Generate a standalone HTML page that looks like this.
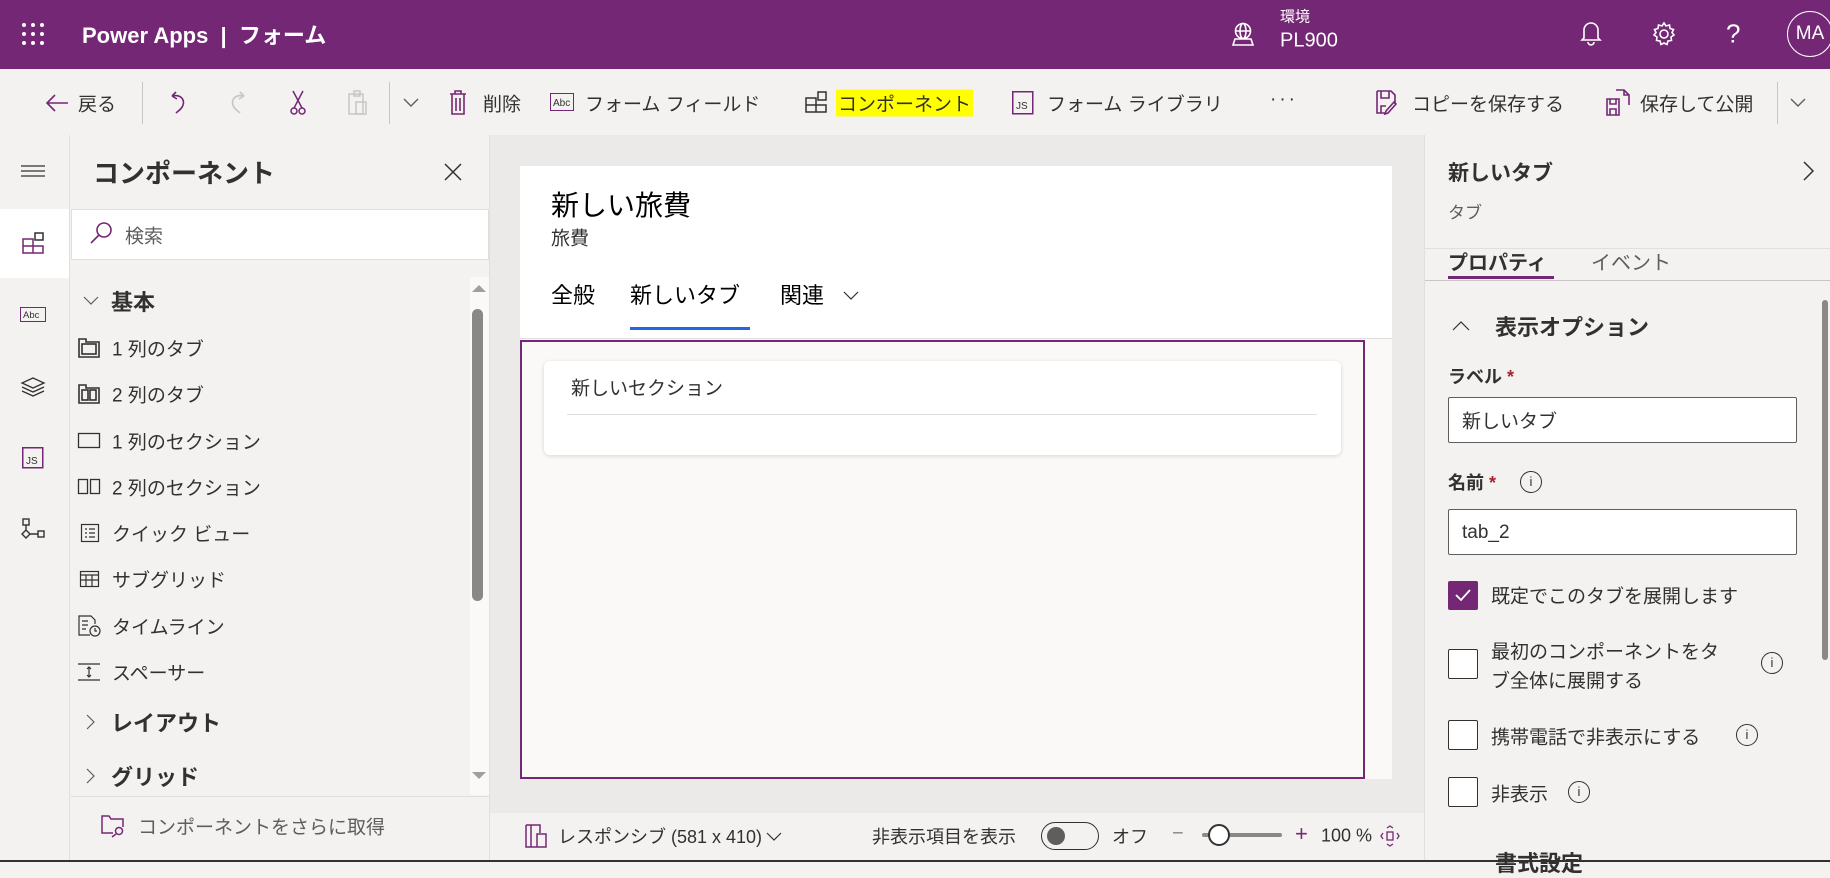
<!DOCTYPE html>
<html><head><meta charset="utf-8"><style>
*{box-sizing:border-box;margin:0;padding:0}
body{width:1830px;height:862px;overflow:hidden;position:relative;background:#f3f2f1;font-family:"Liberation Sans","Noto Sans CJK JP",sans-serif;color:#323130}
.a{position:absolute;white-space:nowrap}
.c{transform:translateY(-50%)}
svg{position:absolute;overflow:visible}
</style></head><body>
<!-- header -->
<div class="a" style="left:0;top:0;width:1830px;height:69px;background:#742774"></div>
<svg style="left:22px;top:23px" width="22" height="22" fill="#fff"><circle cx="2" cy="2" r="2"/><circle cx="11" cy="2" r="2"/><circle cx="20" cy="2" r="2"/><circle cx="2" cy="11" r="2"/><circle cx="11" cy="11" r="2"/><circle cx="20" cy="11" r="2"/><circle cx="2" cy="20" r="2"/><circle cx="11" cy="20" r="2"/><circle cx="20" cy="20" r="2"/></svg>
<div class="a c" style="left:82px;top:34px;color:#fff;font-size:22px;font-weight:bold">Power Apps &nbsp;|&nbsp; フォーム</div>
<svg style="left:1232px;top:22px" width="22" height="24" fill="none" stroke="#fff" stroke-width="1.6"><circle cx="11" cy="9" r="7.5"/><ellipse cx="11" cy="9" rx="3" ry="7.5"/><path d="M3.5 9h15M1 23h20l-2-6H3z"/></svg>
<div class="a c" style="left:1280px;top:16px;color:#fff;font-size:15px">環境</div>
<div class="a c" style="left:1280px;top:41px;color:#fff;font-size:20px">PL900</div>
<svg style="left:1580px;top:20px" width="22" height="26" fill="none" stroke="#fff" stroke-width="1.6"><path d="M4 18V10a7 7 0 0 1 14 0v8l2 2H2z M8 22a3 3 0 0 0 6 0"/></svg>
<svg style="left:1652px;top:22px" width="24" height="24" fill="none" stroke="#fff" stroke-width="1.6"><circle cx="12" cy="12" r="4"/><path d="M12 1l2 3 3.5-1 .5 3.5 3.5 1-1.5 3 2 2.5-3 2 .5 3.5-3.5.5-1 3.5-3-1.5-3 1.5-1-3.5-3.5-.5.5-3.5-3-2 2-2.5-1.5-3 3.5-1 .5-3.5 3.5 1z"/></svg>
<div class="a c" style="left:1726px;top:34px;color:#fff;font-size:26px">?</div>
<div class="a" style="left:1787px;top:11px;width:46px;height:46px;border:1.5px solid #fff;border-radius:50%;color:#fff;font-size:19px;line-height:43px;text-align:center">MA</div>
<!-- toolbar -->
<div class="a" style="left:0;top:69px;width:1830px;height:66px;background:#f3f2f1;font-size:19px"></div>
<svg style="left:45px;top:93px" width="24" height="20" fill="none" stroke="#742774" stroke-width="1.6"><path d="M23 10H2M10 2L2 10l8 8"/></svg>
<div class="a c" style="left:78px;top:103px;font-size:19px">戻る</div>
<div class="a" style="left:142px;top:82px;width:1px;height:42px;background:#c8c6c4"></div>
<svg style="left:170px;top:90px" width="16" height="24" fill="none" stroke="#742774" stroke-width="1.6"><path d="M2 6l4-4M2 6l5 3M2 6c8-2 13 3 11 9-1 4-5 6-7 8"/></svg>
<svg style="left:230px;top:90px" width="16" height="24" fill="none" stroke="#c8c6c4" stroke-width="1.6"><path d="M14 6l-4-4M14 6l-5 3M14 6C6 4 1 9 3 15c1 4 5 6 7 8"/></svg>
<svg style="left:290px;top:90px" width="16" height="26" fill="none" stroke="#742774" stroke-width="1.5"><path d="M3 1l9 17M13 1L4 18"/><circle cx="4" cy="21" r="3"/><circle cx="12" cy="21" r="3"/></svg>
<svg style="left:348px;top:90px" width="20" height="26" fill="none" stroke="#c8c6c4" stroke-width="1.5"><rect x="1" y="4" width="14" height="20"/><rect x="6" y="1" width="6" height="5"/><rect x="8" y="12" width="10" height="12"/></svg>
<div class="a" style="left:389px;top:82px;width:1px;height:42px;background:#c8c6c4"></div>
<svg style="left:403px;top:98px" width="16" height="10" fill="none" stroke="#605e5c" stroke-width="1.4"><path d="M1 1l7 7 7-7"/></svg>
<svg style="left:449px;top:90px" width="18" height="26" fill="none" stroke="#742774" stroke-width="1.6"><path d="M1 4h16M6 4V1h6v3M3 4v20h12V4M7 8v13M11 8v13"/></svg>
<div class="a c" style="left:483px;top:103px;font-size:19px">削除</div>
<svg style="left:550px;top:93px" width="24" height="18"><rect x=".5" y=".5" width="23" height="17" fill="none" stroke="#742774"/><text x="3" y="13" font-size="10" fill="#323130" font-family="Liberation Sans">Abc</text></svg>
<div class="a c" style="left:585px;top:103px;font-size:19px">フォーム フィールド</div>
<svg style="left:805px;top:91px" width="22" height="22" fill="none" stroke="#323130" stroke-width="1.5"><path d="M1 7h10v14H1zM1 14h20v7H11M13 1h8v8h-8z"/></svg>
<div class="a c" style="left:836px;top:103px;font-size:19px;background:#ffff00;padding:0 2px">コンポーネント</div>
<svg style="left:1012px;top:91px" width="22" height="24"><rect x=".75" y=".75" width="20" height="22" fill="none" stroke="#742774" stroke-width="1.5"/><text x="4" y="18" font-size="10" fill="#323130" font-family="Liberation Sans">JS</text></svg>
<div class="a c" style="left:1047px;top:103px;font-size:19px">フォーム ライブラリ</div>
<div class="a c" style="left:1270px;top:100px;font-size:19px;letter-spacing:3px">···</div>
<svg style="left:1376px;top:90px" width="22" height="26" fill="none" stroke="#742774" stroke-width="1.6"><path d="M1 1h14l4 4v9M1 1v22h8M5 1v7h8V1M5 23v-7h5M20 14l-8 9-3 1 1-3 8-9z"/></svg>
<div class="a c" style="left:1412px;top:103px;font-size:19px">コピーを保存する</div>
<svg style="left:1606px;top:89px" width="24" height="28" fill="none" stroke="#742774" stroke-width="1.6"><path d="M10 1h8l5 5v10M1 10h12v16H1zM4 10v5h6v-5M4 26v-6h6v6M18 1v5h5"/></svg>
<div class="a c" style="left:1640px;top:103px;font-size:19px">保存して公開</div>
<div class="a" style="left:1777px;top:82px;width:1px;height:42px;background:#c8c6c4"></div>
<svg style="left:1790px;top:98px" width="16" height="10" fill="none" stroke="#605e5c" stroke-width="1.4"><path d="M1 1l7 7 7-7"/></svg>
<!-- left rail -->
<div class="a" style="left:0;top:135px;width:70px;height:727px;background:#f3f2f1;border-right:1px solid #e1dfdd"></div>
<div class="a" style="left:0;top:209px;width:69px;height:69px;background:#fff"></div>
<svg style="left:21px;top:165px" width="24" height="12" stroke="#323130" stroke-width="1.2"><path d="M0 1h24M0 6h24M0 11h24"/></svg>
<svg style="left:22px;top:232px" width="22" height="22" fill="none" stroke="#742774" stroke-width="1.5"><path d="M1 7h10v14H1zM1 14h20v7H11"/><rect x="13" y="1" width="8" height="7" stroke="#323130"/></svg>
<svg style="left:20px;top:307px" width="26" height="15"><rect x=".5" y=".5" width="25" height="14" fill="none" stroke="#742774"/><text x="3" y="11" font-size="9.5" fill="#323130" font-family="Liberation Sans">Abc</text></svg>
<svg style="left:21px;top:377px" width="24" height="20" fill="none" stroke="#323130" stroke-width="1.3"><path d="M12 1l11 5-11 5L1 6zM1 10l11 5 11-5M1 14l11 5 11-5"/></svg>
<svg style="left:22px;top:447px" width="22" height="22"><rect x=".75" y=".75" width="20" height="20" fill="none" stroke="#742774" stroke-width="1.5"/><text x="4" y="17" font-size="10" fill="#323130" font-family="Liberation Sans">JS</text></svg>
<svg style="left:22px;top:518px" width="24" height="24" fill="none" stroke="#323130" stroke-width="1.4"><rect x="1" y="1" width="6" height="6"/><path d="M4 7v6M4 12l4 4-4 4-4-4zM8 16h8"/><rect x="16" y="13" width="6" height="6"/></svg>
<!-- component panel -->
<div class="a" style="left:93px;top:172px;transform:translateY(-50%);font-size:26px;font-weight:bold">コンポーネント</div>
<svg style="left:444px;top:163px" width="18" height="18" stroke="#323130" stroke-width="1.5"><path d="M1 1l16 16M17 1L1 17"/></svg>
<div class="a" style="left:71px;top:209px;width:418px;height:51px;background:#fff;border:1px solid #e1dfdd"></div>
<svg style="left:90px;top:222px" width="22" height="22" fill="none" stroke="#742774" stroke-width="1.6"><circle cx="14" cy="8" r="7"/><path d="M9 13L1 21"/></svg>
<div class="a c" style="left:125px;top:235px;font-size:19px;color:#605e5c">検索</div>
<div class="a" style="left:470px;top:277px;width:19px;height:518px;background:#faf9f8"></div>
<svg style="left:472px;top:284px" width="14" height="8" fill="#a19f9d"><path d="M0 8L7 1l7 7z"/></svg>
<svg style="left:472px;top:772px" width="14" height="8" fill="#a19f9d"><path d="M0 0l7 7 7-7z"/></svg>
<div class="a" style="left:472px;top:309px;width:11px;height:292px;background:#8a8886;border-radius:6px"></div>
<svg style="left:83px;top:296px" width="16" height="9" fill="none" stroke="#605e5c" stroke-width="1.2"><path d="M1 1l7 7 7-7"/></svg>
<div class="a c" style="left:111px;top:301px;font-size:22px;font-weight:bold">基本</div>
<div style="font-size:19px">
<svg style="left:78px;top:338px" width="22" height="20" fill="none" stroke="#323130" stroke-width="1.6"><path d="M1 1h7v3h13v15H1z"/><rect x="4" y="6" width="14" height="10"/></svg>
<div class="a c" style="left:112px;top:348px">1 列のタブ</div>
<svg style="left:78px;top:384px" width="22" height="20" fill="none" stroke="#323130" stroke-width="1.6"><path d="M1 1h7v3h13v15H1z"/><rect x="4" y="6" width="6" height="10"/><rect x="12" y="6" width="6" height="10"/></svg>
<div class="a c" style="left:112px;top:394px">2 列のタブ</div>
<svg style="left:78px;top:433px" width="22" height="16" fill="none" stroke="#323130" stroke-width="1.3"><rect x=".5" y=".5" width="21" height="14"/></svg>
<div class="a c" style="left:112px;top:441px">1 列のセクション</div>
<svg style="left:78px;top:479px" width="22" height="16" fill="none" stroke="#323130" stroke-width="1.3"><rect x=".5" y=".5" width="9" height="14"/><rect x="12.5" y=".5" width="9" height="14"/></svg>
<div class="a c" style="left:112px;top:487px">2 列のセクション</div>
<svg style="left:81px;top:524px" width="18" height="18" fill="none" stroke="#323130" stroke-width="1.2"><rect x=".5" y=".5" width="17" height="17"/><path d="M4 5h2M8 5h6M4 9h2M8 9h6M4 13h2M8 13h6"/></svg>
<div class="a c" style="left:112px;top:533px">クイック ビュー</div>
<svg style="left:80px;top:571px" width="19" height="16" fill="none" stroke="#323130" stroke-width="1.2"><rect x=".5" y=".5" width="18" height="15"/><path d="M.5 4h18M6 4v11M.5 9h18M12 4v11"/></svg>
<div class="a c" style="left:112px;top:579px">サブグリッド</div>
<svg style="left:78px;top:615px" width="24" height="22" fill="none" stroke="#323130" stroke-width="1.2"><path d="M12 20H1V1h12l4 4v4M4 6h6M4 10h6M4 14h4"/><circle cx="17" cy="16" r="5"/><path d="M17 13v3h2"/></svg>
<div class="a c" style="left:112px;top:626px">タイムライン</div>
<svg style="left:78px;top:663px" width="22" height="18" fill="none" stroke="#323130" stroke-width="1.2"><path d="M0 1h22M0 17h22M11 4v10M9 6l2-2 2 2M9 12l2 2 2-2"/></svg>
<div class="a c" style="left:112px;top:672px">スペーサー</div>
</div>
<svg style="left:86px;top:714px" width="9" height="16" fill="none" stroke="#605e5c" stroke-width="1.2"><path d="M1 1l7 7-7 7"/></svg>
<div class="a c" style="left:111px;top:722px;font-size:22px;font-weight:bold">レイアウト</div>
<svg style="left:86px;top:768px" width="9" height="16" fill="none" stroke="#605e5c" stroke-width="1.2"><path d="M1 1l7 7-7 7"/></svg>
<div class="a c" style="left:111px;top:776px;font-size:22px;font-weight:bold">グリッド</div>
<div class="a" style="left:71px;top:796px;width:418px;height:1px;background:#e1dfdd"></div>
<svg style="left:101px;top:815px" width="24" height="22" fill="none" stroke="#742774" stroke-width="1.5"><path d="M12 18H1V1h7l2 3h12v8"/><circle cx="18" cy="16" r="3.5"/><path d="M15 19l-4 3"/></svg>
<div class="a c" style="left:138px;top:826px;font-size:19px;color:#605e5c">コンポーネントをさらに取得</div>
<div class="a" style="left:489px;top:135px;width:1px;height:727px;background:#e1dfdd"></div>
<!-- canvas -->
<div class="a" style="left:490px;top:135px;width:934px;height:678px;background:#ebeae9"></div>
<div class="a" style="left:520px;top:166px;width:872px;height:172px;background:#fff"></div>
<div class="a c" style="left:551px;top:204px;font-size:28px;color:#000">新しい旅費</div>
<div class="a c" style="left:551px;top:237px;font-size:19px;color:#323130">旅費</div>
<div class="a c" style="left:551px;top:294px;font-size:22px;color:#000">全般</div>
<div class="a c" style="left:630px;top:294px;font-size:22px;color:#000">新しいタブ</div>
<div class="a" style="left:630px;top:327px;width:120px;height:3px;background:#2266e3"></div>
<div class="a c" style="left:780px;top:294px;font-size:22px;color:#000">関連</div>
<svg style="left:843px;top:291px" width="16" height="9" fill="none" stroke="#323130" stroke-width="1.2"><path d="M1 1l7 7 7-7"/></svg>
<div class="a" style="left:520px;top:338px;width:872px;height:441px;background:#faf9f8;border-top:1px solid #e1dfdd"></div>
<div class="a" style="left:520px;top:340px;width:845px;height:439px;border:2px solid #742774"></div>
<div class="a" style="left:544px;top:361px;width:797px;height:94px;background:#fff;border-radius:6px;box-shadow:0 1px 4px rgba(0,0,0,.15)"></div>
<div class="a c" style="left:571px;top:387px;font-size:19px;color:#323130">新しいセクション</div>
<div class="a" style="left:567px;top:414px;width:750px;height:1px;background:#e1dfdd"></div>
<!-- bottom bar -->
<div class="a" style="left:490px;top:813px;width:934px;height:49px;background:#f3f2f1"></div>
<svg style="left:525px;top:824px" width="22" height="24" fill="none" stroke="#742774" stroke-width="1.5"><path d="M1 1h14v8M1 1v22h20V10h-9v13M6 1v22"/></svg>
<div class="a c" style="left:558px;top:836px;font-size:18px">レスポンシブ (581 x 410)</div>
<svg style="left:766px;top:832px" width="16" height="9" fill="none" stroke="#323130" stroke-width="1.2"><path d="M1 1l7 7 7-7"/></svg>
<div class="a c" style="left:872px;top:836px;font-size:18px">非表示項目を表示</div>
<div class="a" style="left:1041px;top:822px;width:58px;height:28px;border:1.5px solid #323130;border-radius:14px"></div>
<div class="a" style="left:1047px;top:827px;width:18px;height:18px;border-radius:50%;background:#605e5c"></div>
<div class="a c" style="left:1112px;top:836px;font-size:18px">オフ</div>
<div class="a c" style="left:1172px;top:834px;font-size:20px;color:#8a8886">−</div>
<div class="a" style="left:1202px;top:833px;width:80px;height:4px;background:#8a8886;border-radius:2px"></div>
<div class="a" style="left:1208px;top:824px;width:22px;height:22px;border-radius:50%;background:#fff;border:2.5px solid #323130"></div>
<div class="a c" style="left:1295px;top:834px;font-size:22px;color:#742774">+</div>
<div class="a c" style="left:1321px;top:836px;font-size:18px">100 %</div>
<svg style="left:1380px;top:825px" width="20" height="22" fill="none" stroke="#742774" stroke-width="1.3"><rect x="7" y="7" width="6" height="8"/><path d="M7 3l3-2 3 2M7 19l3 2 3-2M3 8L1 11l2 3M17 8l2 3-2 3"/></svg>
<!-- right panel -->
<div class="a" style="left:1424px;top:135px;width:406px;height:727px;background:#f3f2f1;border-left:1px solid #e1dfdd"></div>
<div class="a c" style="left:1448px;top:172px;font-size:21px;font-weight:bold">新しいタブ</div>
<svg style="left:1803px;top:161px" width="11" height="20" fill="none" stroke="#323130" stroke-width="1.5"><path d="M1 1l9 9-9 9"/></svg>
<div class="a c" style="left:1448px;top:211px;font-size:17px;color:#605e5c">タブ</div>
<div class="a" style="left:1425px;top:248px;width:405px;height:1px;background:#e1dfdd"></div>
<div class="a c" style="left:1448px;top:261px;font-size:20px;font-weight:bold">プロパティ</div>
<div class="a" style="left:1448px;top:276px;width:106px;height:3px;background:#742774"></div>
<div class="a c" style="left:1591px;top:261px;font-size:20px;color:#605e5c">イベント</div>
<div class="a" style="left:1425px;top:280px;width:405px;height:1px;background:#c8c6c4"></div>
<div class="a" style="left:1822px;top:300px;width:6px;height:360px;background:#8a8886;border-radius:3px"></div>
<svg style="left:1452px;top:321px" width="18" height="10" fill="none" stroke="#323130" stroke-width="1.2"><path d="M1 9l8-8 8 8"/></svg>
<div class="a c" style="left:1495px;top:326px;font-size:22px;font-weight:bold">表示オプション</div>
<div class="a c" style="left:1448px;top:376px;font-size:18px;font-weight:bold">ラベル <span style="color:#a4262c">*</span></div>
<div class="a" style="left:1448px;top:397px;width:349px;height:46px;background:#fff;border:1px solid #605e5c;border-radius:2px"></div>
<div class="a c" style="left:1462px;top:420px;font-size:19px">新しいタブ</div>
<div class="a c" style="left:1448px;top:482px;font-size:18px;font-weight:bold">名前 <span style="color:#a4262c">*</span></div>
<div class="a" style="left:1520px;top:471px;width:22px;height:22px;border:1.5px solid #323130;border-radius:50%;font-size:13px;text-align:center;line-height:19px">i</div>
<div class="a" style="left:1448px;top:509px;width:349px;height:46px;background:#fff;border:1px solid #605e5c;border-radius:2px"></div>
<div class="a c" style="left:1462px;top:533px;font-size:19px">tab_2</div>
<div class="a" style="left:1448px;top:581px;width:30px;height:29px;background:#742774;border-radius:2px"></div>
<svg style="left:1455px;top:589px" width="16" height="12" fill="none" stroke="#fff" stroke-width="1.8"><path d="M1 6l5 5 9-10"/></svg>
<div class="a c" style="left:1491px;top:595px;font-size:19px;color:#323130">既定でこのタブを展開します</div>
<div class="a" style="left:1448px;top:649px;width:30px;height:30px;background:#fff;border:1.5px solid #323130;border-radius:2px"></div>
<div class="a" style="left:1491px;top:638px;font-size:19px;line-height:29px;color:#323130">最初のコンポーネントをタ<br>ブ全体に展開する</div>
<div class="a" style="left:1761px;top:652px;width:22px;height:22px;border:1.5px solid #323130;border-radius:50%;font-size:13px;text-align:center;line-height:19px">i</div>
<div class="a" style="left:1448px;top:720px;width:30px;height:30px;background:#fff;border:1.5px solid #323130;border-radius:2px"></div>
<div class="a c" style="left:1491px;top:736px;font-size:19px">携帯電話で非表示にする</div>
<div class="a" style="left:1736px;top:724px;width:22px;height:22px;border:1.5px solid #323130;border-radius:50%;font-size:13px;text-align:center;line-height:19px">i</div>
<div class="a" style="left:1448px;top:777px;width:30px;height:30px;background:#fff;border:1.5px solid #323130;border-radius:2px"></div>
<div class="a c" style="left:1491px;top:793px;font-size:19px">非表示</div>
<div class="a" style="left:1568px;top:781px;width:22px;height:22px;border:1.5px solid #323130;border-radius:50%;font-size:13px;text-align:center;line-height:19px">i</div>
<div class="a" style="left:1495px;top:846px;font-size:22px;font-weight:bold">書式設定</div>
<div class="a" style="left:0;top:860px;width:1830px;height:2px;background:#323130"></div>
</body></html>
